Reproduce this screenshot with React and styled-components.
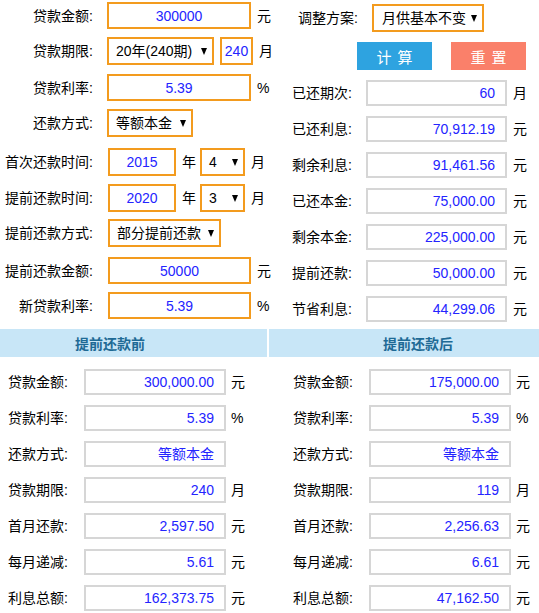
import React from "react";
import styled, { createGlobalStyle, css } from "styled-components";

const GlobalStyle = createGlobalStyle`
  html, body {
    margin: 0;
    padding: 0;
    background: #fff;
  }
  body {
    font-family: "Liberation Sans", "Noto Sans CJK SC", sans-serif;
    font-size: 14px;
    color: #000;
  }
`;

const ORANGE = "#f39b1e";
const VALUE_BLUE = "#2424ff";

const Page = styled.div`
  width: 539px;
  height: 613px;
  overflow: hidden;
`;

const Top = styled.div`
  display: grid;
  grid-template-columns: 270px 1fr;
  height: 322px;
`;

const Column = styled.div`
  display: flex;
  flex-direction: column;
  gap: ${(p) => p.$gap || 0}px;
  padding-top: ${(p) => p.$pt || 0}px;
`;

const Row = styled.div`
  display: flex;
  align-items: center;
  height: ${(p) => p.$h || 26}px;
  margin-top: ${(p) => p.$mt || 0}px;
  padding-left: ${(p) => p.$pl || 0}px;
  flex-shrink: 0;
`;

const Label = styled.div`
  width: ${(p) => p.$w}px;
  text-align: ${(p) => p.$align || "right"};
  margin-right: ${(p) => p.$gap ?? 14}px;
  line-height: 20px;
  white-space: nowrap;
  flex-shrink: 0;
`;

const boxBase = css`
  box-sizing: border-box;
  height: ${(p) => p.$h || 27}px;
  width: ${(p) => p.$w}px;
  display: flex;
  align-items: center;
  flex-shrink: 0;
  line-height: 18px;
  white-space: nowrap;
`;

const OrangeInput = styled.div`
  ${boxBase};
  border: 2px solid ${ORANGE};
  justify-content: center;
  color: ${VALUE_BLUE};
  margin-left: ${(p) => p.$ml || 0}px;
`;

const GrayInput = styled.div`
  ${boxBase};
  border: 2px solid #d6d6d6;
  justify-content: flex-end;
  padding-right: 10px;
  color: ${VALUE_BLUE};
`;

const Select = styled.div`
  ${boxBase};
  height: 28px;
  border: 2px solid ${ORANGE};
  justify-content: space-between;
  padding: 0 5px 0 ${(p) => p.$pl || 7}px;
  color: #000;
  &::after {
    content: "";
    flex-shrink: 0;
    width: 0;
    height: 0;
    margin-left: 4px;
    border-left: 3.5px solid transparent;
    border-right: 3.5px solid transparent;
    border-top: 7px solid #000;
  }
`;

const Unit = styled.span`
  margin-left: ${(p) => p.$ml ?? 6}px;
  margin-right: ${(p) => p.$mr || 0}px;
  line-height: 20px;
  white-space: nowrap;
`;

const Buttons = styled.div`
  display: flex;
  gap: 19px;
  padding-left: 87px;
  height: 28px;
  flex-shrink: 0;
`;

const Button = styled.div`
  width: 75px;
  height: 28px;
  display: flex;
  align-items: center;
  justify-content: center;
  color: #fff;
  font-size: 15px;
  letter-spacing: 6px;
  text-indent: 6px;
  background: ${(p) => (p.$variant === "reset" ? "#fa806a" : "#2ea3e0")};
`;

const Headers = styled.div`
  display: grid;
  grid-template-columns: 267px 1fr;
  gap: 2px;
  margin-top: 7px;
`;

const Header = styled.div`
  height: 28px;
  background: #c8e6f7;
  color: #1e6a95;
  font-weight: bold;
  font-size: 14px;
  display: flex;
  align-items: center;
  padding-left: ${(p) => p.$pl}px;
`;

const Bottom = styled.div`
  display: grid;
  grid-template-columns: 268px 1fr;
  padding-top: 12px;
`;

const before = [
  ["贷款金额", "300,000.00", "元"],
  ["贷款利率", "5.39", "%"],
  ["还款方式", "等额本金", ""],
  ["贷款期限", "240", "月"],
  ["首月还款", "2,597.50", "元"],
  ["每月递减", "5.61", "元"],
  ["利息总额", "162,373.75", "元"],
];

const after = [
  ["贷款金额", "175,000.00", "元"],
  ["贷款利率", "5.39", "%"],
  ["还款方式", "等额本金", ""],
  ["贷款期限", "119", "月"],
  ["首月还款", "2,256.63", "元"],
  ["每月递减", "6.61", "元"],
  ["利息总额", "47,162.50", "元"],
];

const stats = [
  ["已还期次", "60", "月"],
  ["已还利息", "70,912.19", "元"],
  ["剩余利息", "91,461.56", "元"],
  ["已还本金", "75,000.00", "元"],
  ["剩余本金", "225,000.00", "元"],
  ["提前还款", "50,000.00", "元"],
  ["节省利息", "44,299.06", "元"],
];

const ResultTable = ({ rows, pl }) => (
  <Column $gap={10}>
    {rows.map(([label, value, unit]) => (
      <Row key={label} $pl={pl}>
        <Label $w={76} $align="left" $gap={0}>
          {label}:
        </Label>
        <GrayInput $w={142} $h={26}>
          {value}
        </GrayInput>
        {unit && <Unit $ml={5}>{unit}</Unit>}
      </Row>
    ))}
  </Column>
);

export default function App() {
  return (
    <Page>
      <GlobalStyle />
      <Top>
        <Column $pt={2}>
          <Row $h={27}>
            <Label $w={93}>贷款金额:</Label>
            <OrangeInput $w={144}>300000</OrangeInput>
            <Unit>元</Unit>
          </Row>
          <Row $h={28} $mt={8}>
            <Label $w={93}>贷款期限:</Label>
            <Select $w={107}>20年(240期)</Select>
            <OrangeInput $w={33} $h={28} $ml={6}>
              240
            </OrangeInput>
            <Unit>月</Unit>
          </Row>
          <Row $h={27} $mt={9}>
            <Label $w={93}>贷款利率:</Label>
            <OrangeInput $w={144}>5.39</OrangeInput>
            <Unit>%</Unit>
          </Row>
          <Row $h={28} $mt={8}>
            <Label $w={93}>还款方式:</Label>
            <Select $w={86}>等额本金</Select>
          </Row>
          <Row $h={28} $mt={11}>
            <Label $w={93} $gap={15}>首次还款时间:</Label>
            <OrangeInput $w={68} $h={28}>2015</OrangeInput>
            <Unit $mr={4}>年</Unit>
            <Select $w={45}>4</Select>
            <Unit>月</Unit>
          </Row>
          <Row $h={28} $mt={8}>
            <Label $w={93} $gap={15}>提前还款时间:</Label>
            <OrangeInput $w={68} $h={28}>2020</OrangeInput>
            <Unit $mr={4}>年</Unit>
            <Select $w={45}>3</Select>
            <Unit>月</Unit>
          </Row>
          <Row $h={28} $mt={7}>
            <Label $w={93} $gap={15}>提前还款方式:</Label>
            <Select $w={113}>部分提前还款</Select>
          </Row>
          <Row $h={27} $mt={10}>
            <Label $w={93} $gap={15}>提前还款金额:</Label>
            <OrangeInput $w={143}>50000</OrangeInput>
            <Unit>元</Unit>
          </Row>
          <Row $h={27} $mt={8}>
            <Label $w={93} $gap={15}>新贷款利率:</Label>
            <OrangeInput $w={143}>5.39</OrangeInput>
            <Unit>%</Unit>
          </Row>
        </Column>
        <Column $pt={4} $gap={10}>
          <Row $h={28}>
            <Label $w={88}>调整方案:</Label>
            <Select $w={112} $pl={8}>
              月供基本不变
            </Select>
          </Row>
          <Buttons>
            <Button>计算</Button>
            <Button $variant="reset">重置</Button>
          </Buttons>
          {stats.map(([label, value, unit]) => (
            <Row key={label}>
              <Label $w={82}>{label}:</Label>
              <GrayInput $w={141} $h={26}>
                {value}
              </GrayInput>
              <Unit>{unit}</Unit>
            </Row>
          ))}
        </Column>
      </Top>
      <Headers>
        <Header $pl={75}>提前还款前</Header>
        <Header $pl={114}>提前还款后</Header>
      </Headers>
      <Bottom>
        <ResultTable rows={before} pl={8} />
        <ResultTable rows={after} pl={25} />
      </Bottom>
    </Page>
  );
}
